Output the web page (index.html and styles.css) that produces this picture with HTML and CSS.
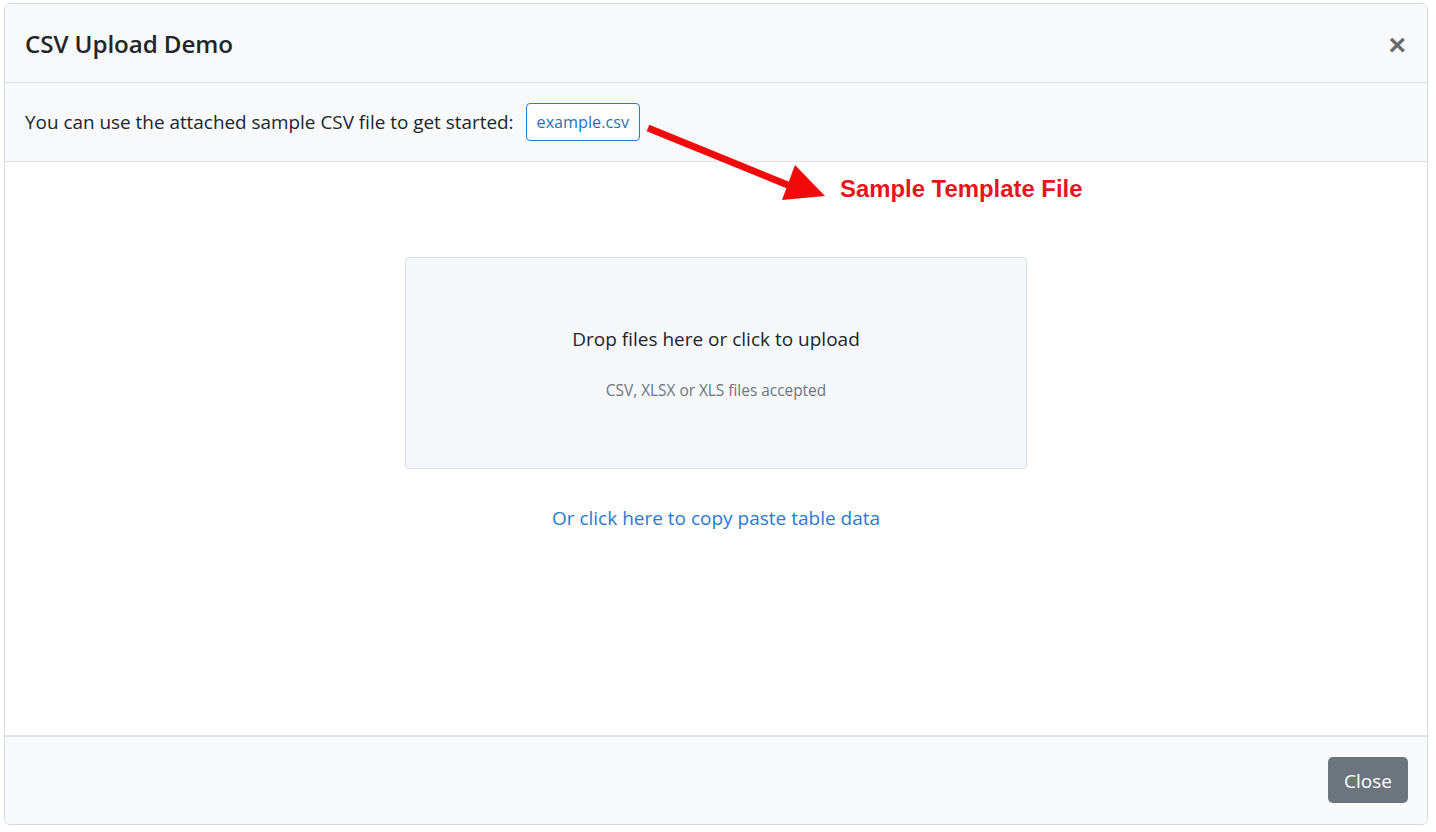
FILE: index.html
```html
<!DOCTYPE html>
<html>
<head>
<meta charset="utf-8">
<link rel="stylesheet" href="styles.css">
</head>
<body>
<div class="modal">
  <div class="modal-header">
    <h5 class="modal-title">CSV Upload Demo</h5>
    <button class="btn-x" aria-label="Close">&times;</button>
  </div>
  <div class="info-row">
    <span>You can use the attached sample CSV file to get started:</span>
    <a class="btn-outline">example.csv</a>
    <div class="annotation">
      <svg class="arrow" width="200" height="100" viewBox="0 0 200 100">
        <line x1="3" y1="15" x2="155" y2="77" stroke="#f20a0a" stroke-width="7"/>
        <polygon points="150,52 180,83 137,87" fill="#f20a0a"/>
      </svg>
      <span class="note">Sample Template File</span>
    </div>
  </div>
  <div class="modal-body">
    <div class="dropzone">
      <div class="dz-title">Drop files here or click to upload</div>
      <div class="dz-sub">CSV, XLSX or XLS files accepted</div>
    </div>
    <a class="paste-link">Or click here to copy paste table data</a>
  </div>
  <div class="modal-footer">
    <button class="btn-secondary">Close</button>
  </div>
</div>
</body>
</html>
```
FILE: styles.css
```css
* { box-sizing: border-box; }
html, body { margin: 0; padding: 0; background: #fff; }
body {
  font-family: "Open Sans", "Noto Sans", sans-serif;
  color: #212529;
  padding: 3px 8px 7px 4px;
}
.modal {
  width: 1424px;
  height: 822px;
  border: 1px solid #d6d9dc;
  border-radius: 6px;
  display: flex;
  flex-direction: column;
  overflow: hidden;
}
.modal-header {
  height: 79px;
  flex: none;
  background: #f8f9fa;
  border-bottom: 1px solid #dee2e6;
  display: flex;
  align-items: center;
  justify-content: space-between;
  padding: 0 20px 0 20px;
}
.modal-title {
  margin: 0;
  font-size: 24.2px;
  font-weight: 600;
  color: #212529;
  letter-spacing: -0.1px;
  padding-top: 1px;
}
.btn-x {
  border: none;
  background: transparent;
  font-family: "Liberation Sans", Arial, sans-serif;
  font-size: 30px;
  font-weight: 700;
  color: #6b6b6b;
  padding: 0;
  line-height: 1;
  margin-top: 3px;
  margin-right: 1px;
}
.info-row {
  position: relative;
  height: 79px;
  flex: none;
  background: #f8f9fa;
  border-bottom: 1px solid #dee2e6;
  display: flex;
  align-items: center;
  padding: 0 20px;
  font-size: 18.9px;
  color: #212529;
}
.btn-outline {
  margin-left: 12px;
  border: 1px solid #2b7bc9;
  border-radius: 4px;
  color: #2a6fb8;
  font-size: 16.2px;
  height: 38px;
  display: inline-flex;
  align-items: center;
  padding: 0 10px;
  background: #fff;
}
.annotation {
  position: absolute;
  left: 640px;
  top: 30px;
  width: 460px;
  height: 100px;
}
.arrow { position: absolute; left: 0; top: 0; }
.note {
  position: absolute;
  left: 195px;
  top: 62px;
  font-family: "Liberation Sans", Arial, sans-serif;
  font-weight: 700;
  font-size: 23.9px;
  color: #e8141b;
  white-space: nowrap;
}
.modal-body {
  flex: 1;
  background: #fff;
  display: flex;
  flex-direction: column;
  align-items: center;
  padding-top: 95px;
}
.dropzone {
  width: 622px;
  height: 212px;
  background: #f5f8fb;
  border: 1px solid #dde1e5;
  border-radius: 4px;
  display: flex;
  flex-direction: column;
  align-items: center;
  padding-top: 68px;
}
.dz-title {
  font-size: 19px;
  color: #212529;
}
.dz-sub {
  margin-top: 28px;
  font-size: 15.4px;
  color: #6c757d;
}
.paste-link {
  margin-top: 36px;
  font-size: 19px;
  color: #2a7ad3;
}
.modal-footer {
  height: 89px;
  flex: none;
  background: #f8f9fa;
  border-top: 2px solid #dee2e6;
  display: flex;
  align-items: center;
  justify-content: flex-end;
  padding: 0 19px 0 0;
}
.btn-secondary {
  width: 80px;
  height: 46px;
  background: #6c757d;
  border: none;
  border-radius: 5px;
  color: #fff;
  font-family: "Open Sans", "Noto Sans", sans-serif;
  font-size: 19px;
  padding-top: 3px;
  margin-bottom: 2px;
}
```
